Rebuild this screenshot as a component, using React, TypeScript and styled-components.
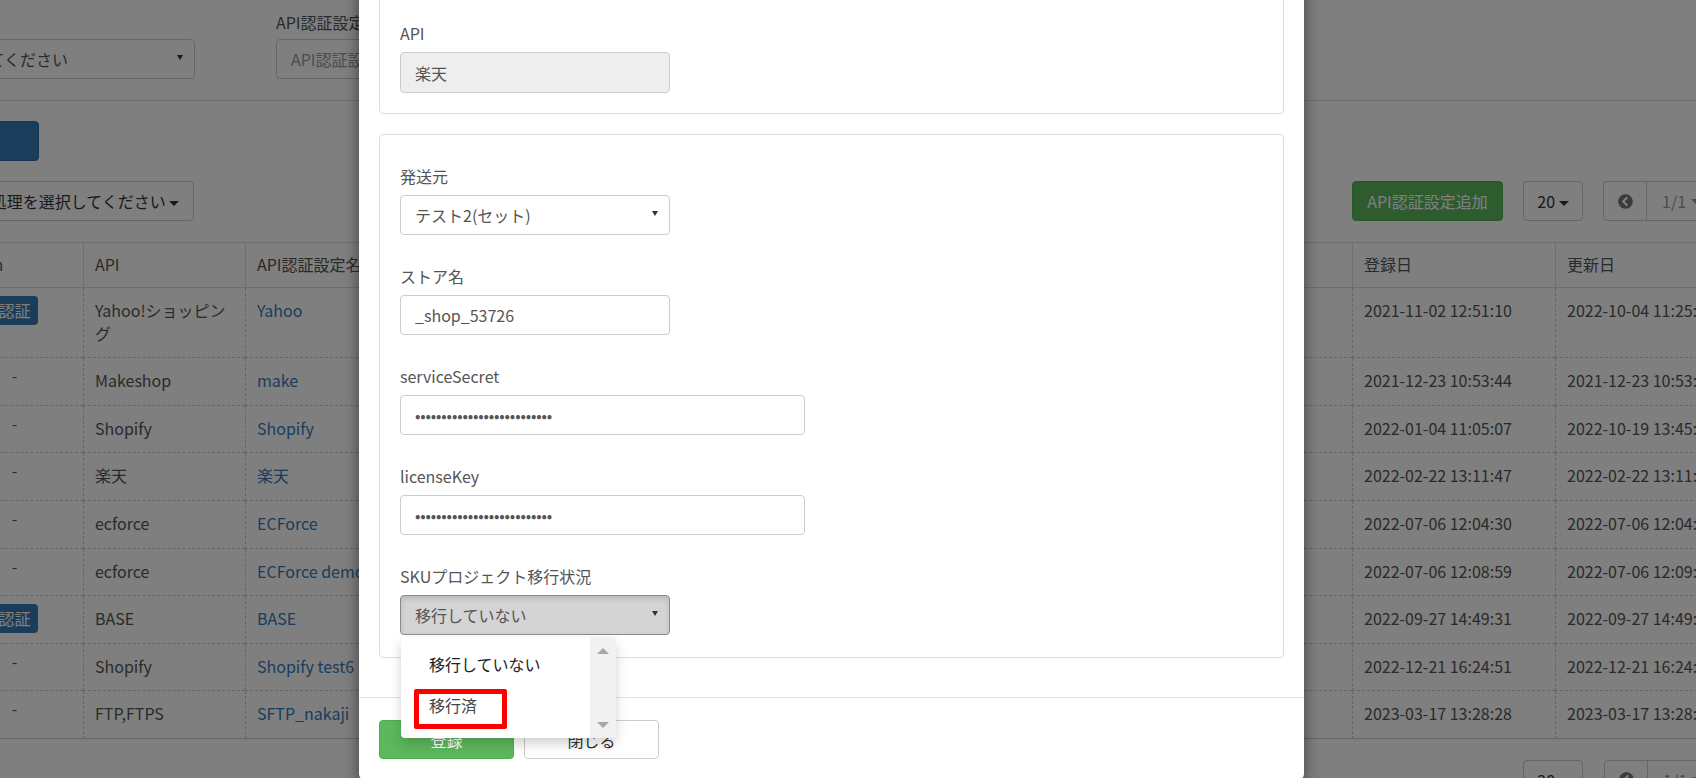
import React from 'react';
import styled, { createGlobalStyle } from 'styled-components';
import { FaChevronCircleLeft } from 'react-icons/fa';

const GlobalStyle = createGlobalStyle`
  html, body {
    margin: 0;
    padding: 0;
    overflow: hidden;
    background: #fff;
  }
  * {
    box-sizing: border-box;
  }
  body {
    font-family: 'Noto Sans CJK JP', 'Noto Sans', sans-serif;
    font-size: 16px;
    color: #555;
  }
`;

const rows = [
  { auth: true, api: 'Yahoo!ショッピング', name: 'Yahoo', created: '2021-11-02 12:51:10', updated: '2022-10-04 11:25:32' },
  { auth: false, api: 'Makeshop', name: 'make', created: '2021-12-23 10:53:44', updated: '2021-12-23 10:53:44' },
  { auth: false, api: 'Shopify', name: 'Shopify', created: '2022-01-04 11:05:07', updated: '2022-10-19 13:45:12' },
  { auth: false, api: '楽天', name: '楽天', created: '2022-02-22 13:11:47', updated: '2022-02-22 13:11:47' },
  { auth: false, api: 'ecforce', name: 'ECForce', created: '2022-07-06 12:04:30', updated: '2022-07-06 12:04:30' },
  { auth: false, api: 'ecforce', name: 'ECForce demo', created: '2022-07-06 12:08:59', updated: '2022-07-06 12:09:10' },
  { auth: true, api: 'BASE', name: 'BASE', created: '2022-09-27 14:49:31', updated: '2022-09-27 14:49:31' },
  { auth: false, api: 'Shopify', name: 'Shopify test6', created: '2022-12-21 16:24:51', updated: '2022-12-21 16:24:51' },
  { auth: false, api: 'FTP,FTPS', name: 'SFTP_nakaji', created: '2023-03-17 13:28:28', updated: '2023-03-17 13:28:28' },
];

const Pager = () => (
  <PagerBox>
    <PagerPrev>
      <FaChevronCircleLeft />
    </PagerPrev>
    <PagerPage>
      1/1 <Caret />
    </PagerPage>
  </PagerBox>
);

const App = () => {
  return (
    <Screen lang='ja'>
      <GlobalStyle />
      <Page>
        <FilterRow>
          <FilterItem $width={269}>
            <Label>&nbsp;</Label>
            <SelectBox>
              選択してください
            </SelectBox>
          </FilterItem>
          <FilterItem $width={320}>
            <Label>API認証設定名</Label>
            <Placeholder>API認証設定名</Placeholder>
          </FilterItem>
        </FilterRow>

        <Toolbar>
          <PrimaryButton aria-label='検索' />
        </Toolbar>

        <Toolbar>
          <OutlineButton $width={218}>
            処理を選択してください <Caret />
          </OutlineButton>
          <ToolbarRight>
            <AddButton>API認証設定追加</AddButton>
            <OutlineButton $width={60}>
              20 <Caret />
            </OutlineButton>
            <Pager />
          </ToolbarRight>
        </Toolbar>

        <TableWrap>
          <Table>
            <colgroup>
              <col style={{ width: 137 }} />
              <col style={{ width: 162 }} />
              <col style={{ width: 1107 }} />
              <col style={{ width: 203 }} />
              <col style={{ width: 203 }} />
            </colgroup>
            <thead>
              <tr>
                <th>Token</th>
                <th>API</th>
                <th>API認証設定名</th>
                <th>登録日</th>
                <th>更新日</th>
              </tr>
            </thead>
            <tbody>
              {rows.map((row) => (
                <tr key={row.name}>
                  <AuthCell>
                    {row.auth ? <Badge>認証</Badge> : <Dash>-</Dash>}
                  </AuthCell>
                  <td>{row.api}</td>
                  <td>
                    <NameLink>{row.name}</NameLink>
                  </td>
                  <td>{row.created}</td>
                  <td>{row.updated}</td>
                </tr>
              ))}
            </tbody>
          </Table>
        </TableWrap>

        <BottomBar>
          <OutlineButton $width={60}>
            20 <Caret />
          </OutlineButton>
          <Pager />
        </BottomBar>
      </Page>

      <Backdrop>
        <Modal>
          <ModalBody>
            <Card>
              <Group>
                <FieldLabel>API</FieldLabel>
                <DisabledField>楽天</DisabledField>
              </Group>
            </Card>
            <Card>
              <Group>
                <FieldLabel>発送元</FieldLabel>
                <SelectField>テスト2(セット)</SelectField>
              </Group>
              <Group>
                <FieldLabel>ストア名</FieldLabel>
                <Field>_shop_53726</Field>
              </Group>
              <Group>
                <FieldLabel>serviceSecret</FieldLabel>
                <Field $wide $masked>{'•'.repeat(26)}</Field>
              </Group>
              <Group>
                <FieldLabel>licenseKey</FieldLabel>
                <Field $wide $masked>{'•'.repeat(26)}</Field>
              </Group>
              <Group>
                <FieldLabel>SKUプロジェクト移行状況</FieldLabel>
                <SelectHolder>
                  <SelectField $open>移行していない</SelectField>
                  <Menu>
                    <MenuList>
                      <MenuItem $selected>移行していない</MenuItem>
                      <MenuItem>移行済</MenuItem>
                    </MenuList>
                    <MenuScroll>
                      <ScrollArrow $up />
                      <ScrollArrow />
                    </MenuScroll>
                    <Highlight />
                  </Menu>
                </SelectHolder>
              </Group>
            </Card>
          </ModalBody>
          <ModalFooter>
            <SaveButton>登録</SaveButton>
            <CloseButton>閉じる</CloseButton>
          </ModalFooter>
        </Modal>
      </Backdrop>
    </Screen>
  );
};

const Screen = styled.div`
  position: relative;
  width: 1696px;
  height: 778px;
  overflow: hidden;
  background: #fff;
`;

const Page = styled.div`
  width: 1900px;
  margin-left: -74px;
`;

const FilterRow = styled.div`
  display: flex;
  gap: 81px;
  height: 101px;
  padding-top: 11px;
  border-bottom: 1px solid #ddd;
`;

const FilterItem = styled.div<{ $width: number }>`
  width: ${(p) => p.$width}px;
`;

const Label = styled.div`
  height: 22px;
  margin-bottom: 6px;
  line-height: 22px;
  white-space: nowrap;
`;

const SelectBox = styled.div`
  position: relative;
  display: flex;
  align-items: center;
  height: 40px;
  padding: 0 14px;
  border: 1px solid #ccc;
  border-radius: 4px;
  color: #555;

  &::after {
    content: '';
    position: absolute;
    top: 15px;
    right: 11px;
    border-style: solid;
    border-width: 5px 3.5px 0;
    border-color: #333 transparent transparent;
  }
`;

const Placeholder = styled.div`
  display: flex;
  align-items: center;
  height: 40px;
  padding: 0 14px;
  border: 1px solid #ccc;
  border-radius: 4px;
  color: #999;
  white-space: nowrap;
`;

const Toolbar = styled.div`
  display: flex;
  height: 40px;
  margin-top: 20px;
  padding-left: 50px;
`;

const ToolbarRight = styled.div`
  display: flex;
  gap: 20px;
  margin-left: 1158px;
`;

const PrimaryButton = styled.button`
  width: 63px;
  height: 40px;
  padding: 0;
  background: #337ab7;
  border: 1px solid #2e6da4;
  border-radius: 4px;
`;

const OutlineButton = styled.button<{ $width: number }>`
  width: ${(p) => p.$width}px;
  height: 40px;
  padding: 0;
  font: inherit;
  color: #333;
  background: #fff;
  border: 1px solid #ccc;
  border-radius: 4px;
  white-space: nowrap;
`;

const AddButton = styled.button`
  width: 151px;
  height: 40px;
  padding: 0;
  font: inherit;
  color: #fff;
  background: #5cb85c;
  border: 1px solid #4cae4c;
  border-radius: 4px;
  white-space: nowrap;
`;

const Caret = styled.span`
  display: inline-block;
  vertical-align: middle;
  border-style: solid;
  border-width: 5px 5px 0;
  border-color: currentColor transparent transparent;
`;

const PagerBox = styled.div`
  display: flex;
  width: 150px;
  height: 40px;
  border: 1px solid #ccc;
  border-radius: 4px;
`;

const PagerPrev = styled.div`
  display: flex;
  align-items: center;
  justify-content: center;
  width: 43px;
  color: #777;
  font-size: 15px;
  border-right: 1px solid #ccc;
`;

const PagerPage = styled.div`
  display: flex;
  align-items: center;
  gap: 5px;
  padding-left: 15px;
  color: #999;
`;

const TableWrap = styled.div`
  margin-top: 21px;
  margin-left: 20px;
`;

const Table = styled.table`
  width: 1812px;
  table-layout: fixed;
  border-collapse: separate;
  border-spacing: 0;
  line-height: 22.6px;

  th,
  td {
    padding: 11px 12px 13px 11px;
    text-align: left;
    font-weight: 400;
    vertical-align: top;
    border-left: 1px dashed #ccc;
    overflow: hidden;
  }
  th {
    height: 46px;
    padding: 10px 12px 10px 11px;
    border-top: 1px solid #ddd;
    border-bottom: 1px solid #ddd;
    border-left: 1px solid #ddd;
  }
  td {
    border-bottom: 1px dashed #ccc;
  }
  tbody tr:last-child td {
    border-bottom: 1px solid #ccc;
  }
`;

const AuthCell = styled.td`
  && {
    text-align: center;
  }
`;

const Badge = styled.span`
  display: block;
  width: 47px;
  height: 29px;
  margin: -3px auto -4px;
  line-height: 28px;
  color: #fff;
  background: #337ab7;
  border-radius: 4px;
`;

const Dash = styled.span`
  display: block;
  margin-top: -5px;
  margin-bottom: 5px;
`;

const NameLink = styled.a`
  color: #337ab7;
  white-space: nowrap;
`;

const BottomBar = styled.div`
  display: flex;
  gap: 21px;
  margin-top: 21px;
  margin-left: 1597px;
`;

const Backdrop = styled.div`
  position: absolute;
  inset: 0;
  background: rgba(0, 0, 0, 0.5);
`;

const Modal = styled.div`
  width: 945px;
  margin-top: -29px;
  margin-left: 359px;
  color: #555;
  background: #fff;
  border-radius: 6px;
  box-shadow: 0 5px 15px rgba(0, 0, 0, 0.5);
`;

const ModalBody = styled.div`
  padding: 20px 20px 0;
`;

const Card = styled.div`
  margin-bottom: 20px;
  padding: 31px 20px 20px;
  background: #fff;
  border: 1px solid #ddd;
  border-radius: 4px;

  & + & {
    margin-bottom: 39px;
    padding-bottom: 22px;
  }
`;

const Group = styled.div`
  & + & {
    margin-top: 31px;
  }
`;

const FieldLabel = styled.div`
  height: 21px;
  margin-bottom: 8px;
  line-height: 21px;
`;

const Field = styled.div<{ $wide?: boolean; $masked?: boolean }>`
  display: flex;
  align-items: center;
  width: ${(p) => (p.$wide ? 405 : 270)}px;
  height: 40px;
  padding: 0 14px;
  color: #555;
  background: #fff;
  border: 1px solid #ccc;
  border-radius: 4px;
  letter-spacing: ${(p) => (p.$masked ? '-0.17px' : 'normal')};
`;

const DisabledField = styled(Field)`
  height: 41px;
  background: #eee;
`;

const SelectField = styled(Field)<{ $open?: boolean }>`
  position: relative;
  background: ${(p) => (p.$open ? '#d4d4d4' : '#fff')};
  border-color: ${(p) => (p.$open ? '#8c8c8c' : '#ccc')};
  box-shadow: ${(p) => (p.$open ? 'inset 0 3px 5px rgba(0, 0, 0, 0.125)' : 'none')};

  &::after {
    content: '';
    position: absolute;
    top: 15px;
    right: 11px;
    border-style: solid;
    border-width: 5px 3.5px 0;
    border-color: #333 transparent transparent;
  }
`;

const SelectHolder = styled.div`
  position: relative;
`;

const Menu = styled.div`
  position: absolute;
  top: 42px;
  left: 1px;
  z-index: 5;
  display: flex;
  width: 215px;
  height: 101px;
  background: #fff;
  border-radius: 4px;
  box-shadow: 0 6px 12px rgba(0, 0, 0, 0.175);
  overflow: hidden;
`;

const MenuList = styled.div`
  flex: 1;
  padding-top: 7px;
`;

const MenuItem = styled.div<{ $selected?: boolean }>`
  height: 41px;
  padding-left: 28px;
  line-height: 41px;
  color: ${(p) => (p.$selected ? '#222' : '#444')};
`;

const MenuScroll = styled.div`
  display: flex;
  flex-direction: column;
  justify-content: space-between;
  align-items: center;
  width: 26px;
  padding: 11px 0 10px;
  background: #f1f1f1;
`;

const ScrollArrow = styled.span<{ $up?: boolean }>`
  border-style: solid;
  border-color: transparent;
  border-width: ${(p) => (p.$up ? '0 6px 6px' : '6px 6px 0')};
  border-bottom-color: ${(p) => (p.$up ? '#a8a8a8' : 'transparent')};
  border-top-color: ${(p) => (p.$up ? 'transparent' : '#a8a8a8')};
`;

const Highlight = styled.div`
  position: absolute;
  top: 52px;
  left: 13px;
  width: 93px;
  height: 40px;
  border: 5px solid #f00;
  border-radius: 2px;
`;

const ModalFooter = styled.div`
  display: flex;
  gap: 10px;
  padding: 22px 20px 21px;
  border-top: 1px solid #e5e5e5;
`;

const SaveButton = styled.button`
  width: 135px;
  height: 39px;
  padding: 0;
  font: inherit;
  color: #fff;
  background: #5cb85c;
  border: 1px solid #4cae4c;
  border-radius: 4px;
`;

const CloseButton = styled.button`
  width: 135px;
  height: 39px;
  padding: 0;
  font: inherit;
  color: #333;
  background: #fff;
  border: 1px solid #ccc;
  border-radius: 4px;
`;

export default App;
